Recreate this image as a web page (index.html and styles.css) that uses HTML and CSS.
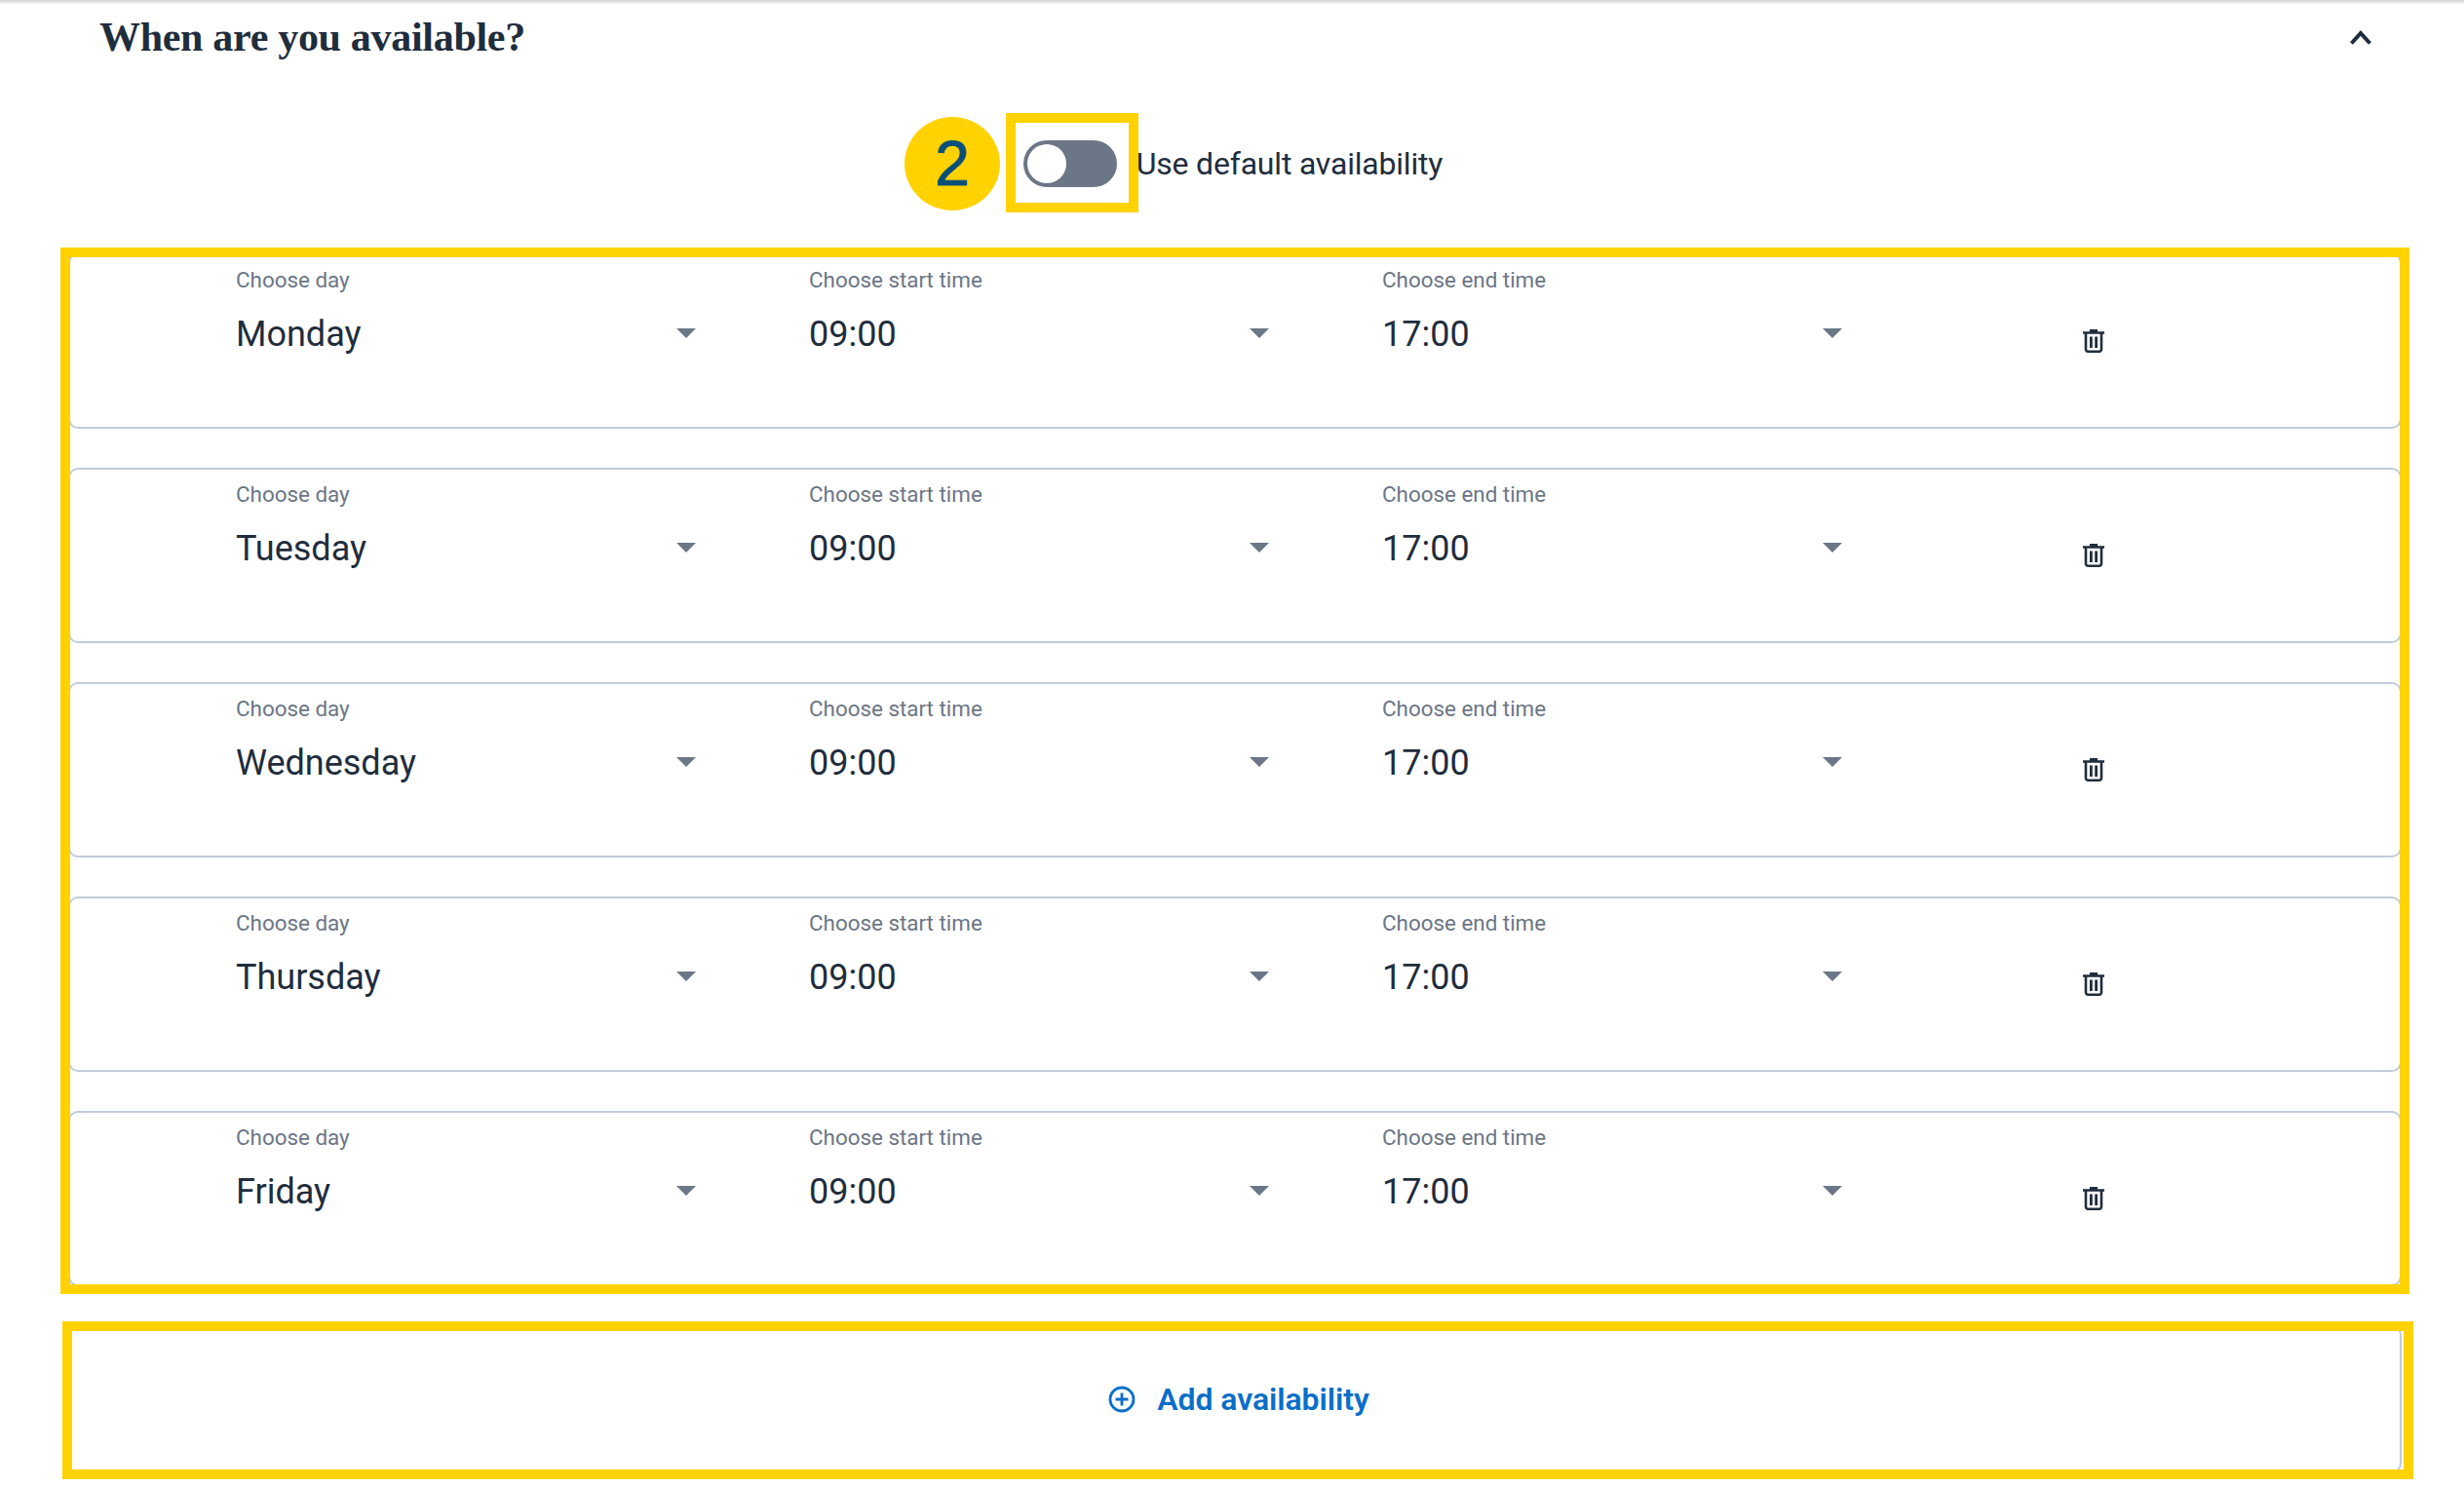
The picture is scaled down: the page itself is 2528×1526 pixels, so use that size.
FILE: index.html
```html
<!DOCTYPE html>
<html lang="en">
<head>
<meta charset="utf-8">
<title>When are you available?</title>
<link rel="stylesheet" href="styles.css">
</head>
<body>
<main class="page">
  <header class="section-head">
    <h2 class="section-title">When are you available?</h2>
    <svg class="chevron" viewBox="0 0 22 15" width="22" height="15"><path d="M1.500 13.500 L11 3 L20.500 13.500" fill="none" stroke="#1f2d3d" stroke-width="4"/></svg>
  </header>

  <div class="toggle-row">
    <span class="toggle"><span class="thumb"></span></span>
    <span class="toggle-label">Use default availability</span>
  </div>

  <section class="rows">
    <div class="card">
      <div class="field"><span class="field-label">Choose day</span><div class="field-value"><span>Monday</span><i class="caret"></i></div></div>
      <div class="field"><span class="field-label">Choose start time</span><div class="field-value"><span>09:00</span><i class="caret"></i></div></div>
      <div class="field"><span class="field-label">Choose end time</span><div class="field-value"><span>17:00</span><i class="caret"></i></div></div>
      <div class="trash-cell"><svg class="trash" viewBox="0 0 22 24" width="22" height="24"><path fill="#1f2d3d" d="M7 0h8v2.2h7v2.5H0V2.200h7z"/><path fill="none" stroke="#1f2d3d" stroke-width="2.600" d="M3 4v16.500a2.200 2.200 0 0 0 2.200 2.200h11.600a2.200 2.200 0 0 0 2.200-2.200V4"/><path fill="#1f2d3d" d="M7 7.500h2.800v11.500H7zM12.200 7.500H15v11.500h-2.800z"/></svg></div>
    </div>
    <div class="card">
      <div class="field"><span class="field-label">Choose day</span><div class="field-value"><span>Tuesday</span><i class="caret"></i></div></div>
      <div class="field"><span class="field-label">Choose start time</span><div class="field-value"><span>09:00</span><i class="caret"></i></div></div>
      <div class="field"><span class="field-label">Choose end time</span><div class="field-value"><span>17:00</span><i class="caret"></i></div></div>
      <div class="trash-cell"><svg class="trash" viewBox="0 0 22 24" width="22" height="24"><path fill="#1f2d3d" d="M7 0h8v2.2h7v2.5H0V2.200h7z"/><path fill="none" stroke="#1f2d3d" stroke-width="2.600" d="M3 4v16.500a2.200 2.200 0 0 0 2.200 2.200h11.600a2.200 2.200 0 0 0 2.200-2.200V4"/><path fill="#1f2d3d" d="M7 7.500h2.800v11.500H7zM12.200 7.500H15v11.500h-2.800z"/></svg></div>
    </div>
    <div class="card">
      <div class="field"><span class="field-label">Choose day</span><div class="field-value"><span>Wednesday</span><i class="caret"></i></div></div>
      <div class="field"><span class="field-label">Choose start time</span><div class="field-value"><span>09:00</span><i class="caret"></i></div></div>
      <div class="field"><span class="field-label">Choose end time</span><div class="field-value"><span>17:00</span><i class="caret"></i></div></div>
      <div class="trash-cell"><svg class="trash" viewBox="0 0 22 24" width="22" height="24"><path fill="#1f2d3d" d="M7 0h8v2.2h7v2.5H0V2.200h7z"/><path fill="none" stroke="#1f2d3d" stroke-width="2.600" d="M3 4v16.500a2.200 2.200 0 0 0 2.200 2.200h11.600a2.200 2.200 0 0 0 2.200-2.200V4"/><path fill="#1f2d3d" d="M7 7.500h2.800v11.500H7zM12.200 7.500H15v11.500h-2.800z"/></svg></div>
    </div>
    <div class="card">
      <div class="field"><span class="field-label">Choose day</span><div class="field-value"><span>Thursday</span><i class="caret"></i></div></div>
      <div class="field"><span class="field-label">Choose start time</span><div class="field-value"><span>09:00</span><i class="caret"></i></div></div>
      <div class="field"><span class="field-label">Choose end time</span><div class="field-value"><span>17:00</span><i class="caret"></i></div></div>
      <div class="trash-cell"><svg class="trash" viewBox="0 0 22 24" width="22" height="24"><path fill="#1f2d3d" d="M7 0h8v2.2h7v2.5H0V2.200h7z"/><path fill="none" stroke="#1f2d3d" stroke-width="2.600" d="M3 4v16.500a2.200 2.200 0 0 0 2.200 2.200h11.600a2.200 2.200 0 0 0 2.200-2.200V4"/><path fill="#1f2d3d" d="M7 7.500h2.800v11.500H7zM12.200 7.500H15v11.500h-2.800z"/></svg></div>
    </div>
    <div class="card">
      <div class="field"><span class="field-label">Choose day</span><div class="field-value"><span>Friday</span><i class="caret"></i></div></div>
      <div class="field"><span class="field-label">Choose start time</span><div class="field-value"><span>09:00</span><i class="caret"></i></div></div>
      <div class="field"><span class="field-label">Choose end time</span><div class="field-value"><span>17:00</span><i class="caret"></i></div></div>
      <div class="trash-cell"><svg class="trash" viewBox="0 0 22 24" width="22" height="24"><path fill="#1f2d3d" d="M7 0h8v2.2h7v2.5H0V2.200h7z"/><path fill="none" stroke="#1f2d3d" stroke-width="2.600" d="M3 4v16.500a2.200 2.200 0 0 0 2.200 2.200h11.600a2.200 2.200 0 0 0 2.200-2.200V4"/><path fill="#1f2d3d" d="M7 7.500h2.800v11.500H7zM12.200 7.500H15v11.500h-2.800z"/></svg></div>
    </div>
  </section>

  <div class="add-card">
    <svg class="plus" viewBox="0 0 28 28" width="28" height="28"><circle cx="14" cy="14" r="12" fill="none" stroke="#0a6fc9" stroke-width="2.800"/><path d="M14 7.500v13M7.500 14h13" fill="none" stroke="#0a6fc9" stroke-width="2.800"/></svg>
    <span class="add-label">Add availability</span>
  </div>
</main>

<div class="note note-badge">2</div>
<div class="note note-toggle"></div>
<div class="note note-rows"></div>
<div class="note note-add"></div>
</body>
</html>
```
FILE: styles.css
```css
* { box-sizing: border-box; }
html, body { margin: 0; padding: 0; background: #fff; }
body {
  position: relative;
  width: 2528px;
  height: 1526px;
  overflow: hidden;
  font-family: Roboto, "Liberation Sans", sans-serif;
  color: #1f2d3d;
}
.page {
  padding: 0 64px 0 70px;
  background: linear-gradient(#cfd2d6, #eceef0 3px, #fff 5px);
  background-repeat: no-repeat;
}
.section-head {
  display: flex;
  justify-content: space-between;
  align-items: center;
  height: 76px;
  padding: 0 31px 0 32px;
}
.section-title {
  margin: 0;
  font-family: "Liberation Serif", serif;
  font-size: 42px;
  font-weight: 700;
  letter-spacing: -0.3px;
  color: #1f2d3d;
}
.toggle-row {
  display: flex;
  align-items: center;
  justify-content: center;
  gap: 20px;
  height: 184px;
  padding-right: 4px;
}
.toggle {
  display: block;
  width: 96px;
  height: 48px;
  padding: 4px;
  border-radius: 24px;
  background: #6b7686;
}
.thumb {
  display: block;
  width: 40px;
  height: 40px;
  border-radius: 50%;
  background: #fff;
}
.toggle-label { font-size: 32px; line-height: 40px; letter-spacing: -0.2px; }
.rows { display: flex; flex-direction: column; gap: 40px; }
.card {
  display: grid;
  grid-template-columns: 588px 588px 588px 1fr;
  height: 180px;
  padding-left: 170px;
  border: 2px solid #c1ccda;
  border-radius: 10px;
}
.field { padding-top: 11px; width: 484px; }
.field-label {
  display: block;
  font-size: 22.4px;
  line-height: 28px;
  color: #6b7686;
}
.field-value {
  display: flex;
  justify-content: space-between;
  align-items: center;
  height: 44px;
  margin-top: 20px;
  padding-right: 12px;
  font-size: 36px;
  color: #1f2d3d;
}
.caret {
  display: block;
  width: 0;
  height: 0;
  margin-top: -2px;
  border-style: solid;
  border-width: 10px 10px 0;
  border-color: #6b7686 transparent transparent;
}
.trash-cell { display: flex; align-items: center; padding-left: 131px; }
.trash { display: block; }
.add-card {
  display: flex;
  align-items: center;
  justify-content: center;
  gap: 22px;
  height: 152px;
  margin-top: 40px;
  padding-left: 8px;
  border: 2px solid #c1ccda;
  border-radius: 10px;
}
.plus { display: block; }
.add-label { font-size: 32px; font-weight: 600; color: #0a6fc9; letter-spacing: -0.08px; }

/* annotation overlays */
.note { position: absolute; border: 10px solid #ffd200; }
.note-badge {
  left: 928px;
  top: 120px;
  width: 98px;
  height: 96px;
  border: 0;
  border-radius: 50%;
  background: #ffd200;
  color: #0b4f79;
  font-family: "Liberation Sans", sans-serif;
  font-size: 64px;
  line-height: 96px;
  text-align: center;
  -webkit-text-stroke: 1px #0b4f79;
}
.note-toggle { left: 1032px; top: 116px; width: 136px; height: 102px; }
.note-rows { left: 62px; top: 254px; width: 2410px; height: 1074px; }
.note-add { left: 64px; top: 1356px; width: 2412px; height: 162px; }
```
